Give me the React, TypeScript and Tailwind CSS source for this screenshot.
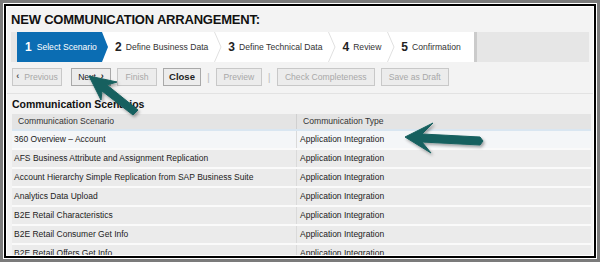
import React from "react";

const rows = [
  "360 Overview – Account",
  "AFS Business Attribute and Assignment Replication",
  "Account Hierarchy Simple Replication from SAP Business Suite",
  "Analytics Data Upload",
  "B2E Retail Characteristics",
  "B2E Retail Consumer Get Info",
  "B2E Retail Offers Get Info",
];

function Chevron() {
  return (
    <svg width="8" height="30" viewBox="0 0 8 30" className="shrink-0">
      <polyline points="0.5,0 7,15 0.5,30" fill="none" stroke="#e0e0e0" strokeWidth="1" />
    </svg>
  );
}

function Step({ n, label }: { n: string; label: string }) {
  return (
    <div className="flex items-center px-[6px] h-full">
      <span className="text-[12px] font-bold text-[#222] mr-[4px]">{n}</span>
      <span className="text-[8.6px] text-[#333]">{label}</span>
    </div>
  );
}

function Btn({ children, enabled, w }: { children: React.ReactNode; enabled?: boolean; w: string }) {
  return (
    <div
      className={`h-[18px] ${w} flex items-center justify-center border bg-[#ececec] text-[8.6px] ${
        enabled ? "text-[#222] border-[#a9a9a9]" : "text-[#a8a8a8] border-[#c8c8c8]"
      }`}
    >
      {children}
    </div>
  );
}

export default function App() {
  return (
    <div
      className="relative w-[600px] h-[262px] bg-[#7b7b7b] p-[3px] overflow-hidden"
      style={{ fontFamily: '"Liberation Sans", Arial, sans-serif' }}
    >
      <div className="w-full h-full border border-white">
        <div className="w-full h-full border-2 border-black">
          <div className="w-full h-full border border-white bg-[#f3f3f3] flex flex-col overflow-hidden">
            <div className="h-[25px] flex items-center pl-[4px] shrink-0">
              <span className="text-[13px] font-bold text-[#111] tracking-[-0.2px]">
                NEW COMMUNICATION ARRANGEMENT:
              </span>
            </div>
            <div className="mx-[4px] h-[30px] flex bg-[#e6e6e6] shrink-0">
              <div className="w-[6px]" />
              <div className="flex bg-white h-full">
                <div className="h-full w-[91px] bg-[#0b6db3] [clip-path:polygon(0_0,85px_0,91px_50%,85px_100%,0_100%)] flex items-center pl-[8px]">
                  <span className="text-[12px] font-bold text-white mr-[5px]">1</span>
                  <span className="text-[8.6px] text-white">Select Scenario</span>
                </div>
                <div className="w-[1px]" />
                <Step n="2" label="Define Business Data" />
                <Chevron />
                <Step n="3" label="Define Technical Data" />
                <Chevron />
                <Step n="4" label="Review" />
                <Chevron />
                <Step n="5" label="Confirmation" />
                <div className="w-[7px]" />
              </div>
              <div className="w-[3px] bg-[#cbcbcb]" />
            </div>
            <div className="flex items-center gap-[6px] pl-[5px] mt-[6px] h-[18px] shrink-0">
              <Btn w="w-[50px]">
                <span className="text-[#555] mr-[5px] text-[9px] font-bold">‹</span>Previous
              </Btn>
              <Btn w="w-[40px] ml-[3px]" enabled>
                Next<span className="ml-[5px] text-[9px] font-bold">›</span>
              </Btn>
              <Btn w="w-[40px]">Finish</Btn>
              <Btn w="w-[38px]" enabled>
                <span className="font-bold text-[9.5px]">Close</span>
              </Btn>
              <span className="text-[#c0c0c0] text-[11px]">|</span>
              <Btn w="w-[46px]">Preview</Btn>
              <span className="text-[#c0c0c0] text-[11px]">|</span>
              <Btn w="w-[98px]">Check Completeness</Btn>
              <Btn w="w-[68px]">Save as Draft</Btn>
            </div>
            <div className="mt-[7px] h-px bg-[#e2e2e2] shrink-0" />
            <div className="h-[20px] flex items-center pl-[5px] pt-[1px] shrink-0">
              <span className="text-[10.5px] font-bold text-[#111]">Communication Scenarios</span>
            </div>
            <div className="ml-[5px] mr-[2px] flex flex-col">
              <div className="flex h-[15px] bg-[#e4e4e4] text-[8.6px] text-[#333] shrink-0">
                <div className="w-[285px] pl-[6px] flex items-center border-r border-[#d0d0d0]">
                  Communication Scenario
                </div>
                <div className="flex-1 pl-[6px] flex items-center">Communication Type</div>
              </div>
              {rows.map((r, i) => (
                <div
                  key={r}
                  className={`flex h-[19px] shrink-0 text-[8.5px] text-[#222] border-t-2 ${
                    i === 0 ? "bg-[#f4f6f8] border-[#d9e6f1]" : "bg-[#ebebeb] border-[#fafafa]"
                  }`}
                >
                  <div className="w-[285px] pl-[2px] flex items-center border-r border-[#dadada]">{r}</div>
                  <div className="flex-1 pl-[3px] flex items-center">Application Integration</div>
                </div>
              ))}
            </div>
          </div>
        </div>
      </div>
      <svg className="absolute inset-0 pointer-events-none" width="600" height="262" viewBox="0 0 600 262">
        <defs>
          <filter id="sh" x="-20%" y="-20%" width="140%" height="140%">
            <feDropShadow dx="1.5" dy="2" stdDeviation="1.5" floodColor="#000" floodOpacity="0.35" />
          </filter>
        </defs>
        <g fill="#17605f" filter="url(#sh)" stroke="#17605f" strokeLinejoin="round" strokeWidth="1">
          <polygon points="89,76 117,82 107,85 138,110 133,115 102,91 101,100" />
          <polygon points="405,137 433,123 422,134 480,137 483,141 480,145 422,142 431,153" />
        </g>
      </svg>
    </div>
  );
}
